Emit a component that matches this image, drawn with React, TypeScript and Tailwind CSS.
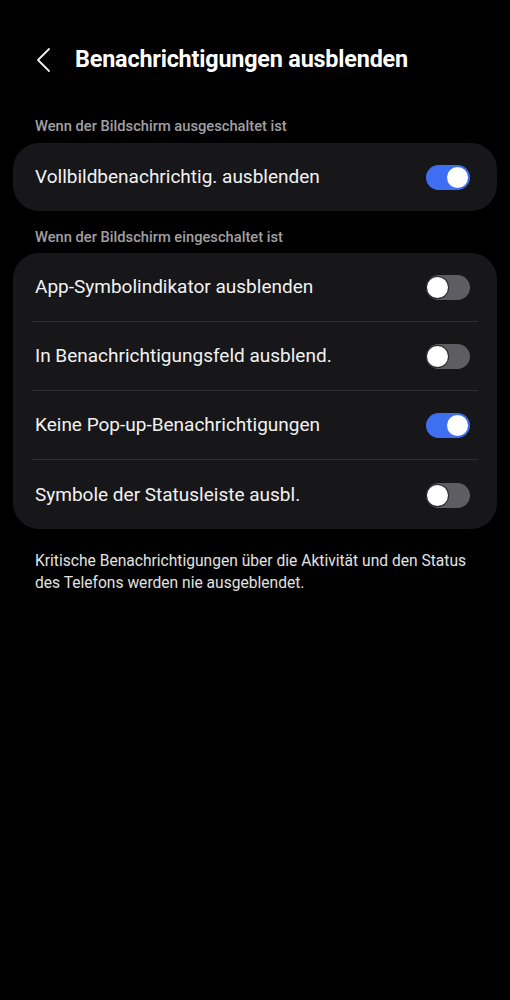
import { useState } from "react";

type Row = { label: string; on: boolean };

function Toggle({ on, onClick }: { on: boolean; onClick: () => void }) {
    return (
        <button
            onClick={onClick}
            className={`relative w-[44px] h-[25px] rounded-full shrink-0 ${on ? "bg-[#3e6ff2]" : "bg-[#5e5e62]"}`}
        >
            <span
                className={`absolute top-[2px] w-[21px] h-[21px] rounded-full bg-white ${on ? "left-[21px]" : "left-[1px] shadow-[0_0_0_1px_#2a2a2e]"}`}
            />
        </button>
    );
}

function SettingRow({ row, onToggle, divider, height }: { row: Row; onToggle: () => void; divider: boolean; height: string }) {
    return (
        <div className="px-[19px]">
            <div
                className={`flex items-center justify-between pl-[3px] pr-[8px] ${height} ${divider ? "pt-px border-b border-[#2f2f33]" : "pt-px"}`}
            >
                <span className="text-[19px] text-[#f2f2f2]">{row.label}</span>
                <Toggle on={row.on} onClick={onToggle} />
            </div>
        </div>
    );
}

export default function App() {
    const [screenOff, setScreenOff] = useState<Row[]>([
        { label: "Vollbildbenachrichtig. ausblenden", on: true },
    ]);
    const [screenOn, setScreenOn] = useState<Row[]>([
        { label: "App-Symbolindikator ausblenden", on: false },
        { label: "In Benachrichtigungsfeld ausblend.", on: false },
        { label: "Keine Pop-up-Benachrichtigungen", on: true },
        { label: "Symbole der Statusleiste ausbl.", on: false },
    ]);

    const flip = (rows: Row[], i: number) => rows.map((r, j) => (j === i ? { ...r, on: !r.on } : r));

    return (
        <div className="min-h-[1000px] bg-black pt-[30px] font-['Roboto',sans-serif] text-white">
            {/* Header */}
            <div className="flex items-center h-[60px] pl-[35px]">
                <svg width="18" height="26" viewBox="0 0 18 26" fill="none" stroke="#f0f0f0" strokeWidth="1.8" strokeLinecap="round" strokeLinejoin="round">
                    <path d="M14 2L3 13l11 11" />
                </svg>
                <h1 className="ml-[22px] text-[23.4px] font-bold tracking-[-0.2px]">Benachrichtigungen ausblenden</h1>
            </div>

            <div className="px-[13px]">
                <div className="pt-[26px] pb-[7px] pl-[22px] text-[14.7px] leading-[20px] font-medium text-[#a0a0a4]">
                    Wenn der Bildschirm ausgeschaltet ist
                </div>
                <div className="rounded-[26px] bg-[#17171a] overflow-hidden">
                    {screenOff.map((r, i) => (
                        <SettingRow
                            key={r.label}
                            row={r}
                            height="h-[68px]"
                            divider={false}
                            onToggle={() => setScreenOff(flip(screenOff, i))}
                        />
                    ))}
                </div>

                <div className="pt-[16px] pb-[6px] pl-[22px] text-[14.7px] leading-[20px] font-medium text-[#a0a0a4]">
                    Wenn der Bildschirm eingeschaltet ist
                </div>
                <div className="rounded-[26px] bg-[#17171a] overflow-hidden">
                    {screenOn.map((r, i) => (
                        <SettingRow
                            key={r.label}
                            row={r}
                            height="h-[69px]"
                            divider={i < screenOn.length - 1}
                            onToggle={() => setScreenOn(flip(screenOn, i))}
                        />
                    ))}
                </div>

                <p className="pt-[21px] pl-[22px] pr-[14px] text-[15.6px] leading-[22px] text-[#e2e2e2]">
                    Kritische Benachrichtigungen über die Aktivität und den Status des Telefons werden nie ausgeblendet.
                </p>
            </div>
        </div>
    );
}
